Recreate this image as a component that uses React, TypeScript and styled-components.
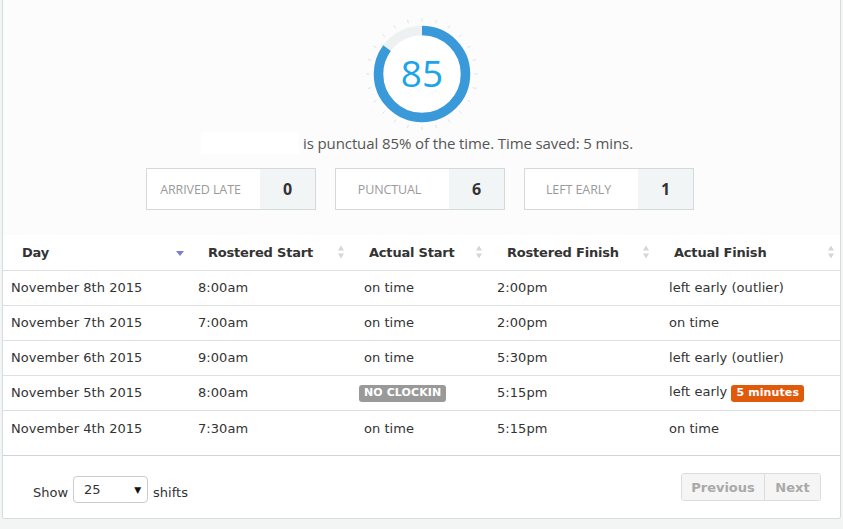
import React from "react";
import styled, { createGlobalStyle } from "styled-components";

const Global = createGlobalStyle`
  html, body { margin: 0; padding: 0; background: #f3f4f4; }
  body { font-family: "Open Sans", "Liberation Sans", sans-serif; }
  * { box-sizing: border-box; }
`;

const Page = styled.div`
  padding: 0 2px 0 2px;
  width: 843px;
`;

const Card = styled.div`
  width: 839px;
  height: 519px;
  background: #fcfcfc;
  border: 1px solid #d6dde1;
  border-top: none;
  border-radius: 0 0 3px 3px;
  display: flex;
  flex-direction: column;
  overflow: hidden;
`;

const Summary = styled.section`
  display: flex;
  flex-direction: column;
  align-items: center;
  padding-top: 16px;
  height: 235px;
`;

const GaugeWrap = styled.div`
  width: 116px;
  height: 116px;
  margin-left: 1px;
`;

const SentenceRow = styled.div`
  display: flex;
  align-items: center;
  height: 22px;
  margin-left: -9px;
`;

const Redacted = styled.span`
  display: inline-block;
  width: 98px;
  height: 22px;
  background: #ffffff;
  margin-right: 4px;
`;

const Sentence = styled.span`
  font-size: 15px;
  color: #555;
  font-family: "Open Sans", sans-serif;
  letter-spacing: -0.1px;
`;

const StatRow = styled.div`
  display: flex;
  gap: 19px;
  margin-top: 14px;
  margin-left: -3px;
`;

const Stat = styled.div`
  width: 170px;
  height: 42px;
  border: 1px solid #d3d9dc;
  display: flex;
  background: #fff;
`;

const StatLabel = styled.div`
  flex: 1;
  display: flex;
  align-items: center;
  justify-content: center;
  padding-right: 6px;
  font-size: 12.5px;
  color: #9a9a9a;
  text-transform: uppercase;
  letter-spacing: -0.1px;
  font-family: "Open Sans", sans-serif;
`;

const StatValue = styled.div`
  width: 55px;
  background: #f2f5f6;
  display: flex;
  align-items: center;
  justify-content: center;
  font-size: 16px;
  font-weight: 700;
  color: #333;
`;

const TableWrap = styled.div`
  background: #fff;
  padding-bottom: 9px;
  border-bottom: 1px solid #cfd4d6;
`;

const Table = styled.table`
  width: 100%;
  border-collapse: collapse;
  table-layout: fixed;
  font-family: "DejaVu Sans", Verdana, sans-serif;
  font-size: 13px;
  color: #333;
`;

const Th = styled.th`
  height: 35px;
  text-align: left;
  font-weight: 700;
  font-size: 13px;
  padding: 0 0 0 19px;
  border-bottom: 1px solid #dde1e3;
  position: relative;
  letter-spacing: -0.2px;
`;

const SortIcon = styled.span`
  position: absolute;
  right: 4px;
  top: 50%;
  transform: translateY(-50%);
  display: flex;
`;

const Td = styled.td<{ $pl: number }>`
  padding: 0 0 0 ${(p) => p.$pl}px;
  white-space: nowrap;
  letter-spacing: 0.05px;
`;

const Row = styled.tr<{ $last?: boolean }>`
  & > td {
    border-bottom: ${(p) => (p.$last ? "none" : "1px solid #dde1e3")};
    height: ${(p) => (p.$last ? "36px" : "35px")};
  }
`;

const Badge = styled.span<{ $tone: "grey" | "orange"; $pull?: boolean }>`
  display: inline-block;
  background: ${(p) => (p.$tone === "grey" ? "#999999" : "#e05a0c")};
  color: #fff;
  font-weight: 700;
  font-size: 11px;
  padding: 1px 5px 2px;
  border-radius: 3px;
  line-height: 14px;
  letter-spacing: 0.1px;
  margin-left: ${(p) => (p.$pull ? "-5px" : "0")};
`;

const Footer = styled.div`
  flex: 1;
  background: #fff;
  display: flex;
  justify-content: space-between;
  align-items: flex-start;
  padding: 17px 19px 0 30px;
`;

const ShowGroup = styled.div`
  display: flex;
  align-items: flex-end;
  gap: 5px;
  margin-top: 3px;
  font-family: "DejaVu Sans", Verdana, sans-serif;
  font-size: 13px;
  color: #333;
`;

const ShowText = styled.span`
  line-height: 16px;
  padding-bottom: 2px;
`;

const FakeSelect = styled.div`
  width: 75px;
  height: 27px;
  border: 1px solid #ccc;
  border-radius: 4px;
  background: #fff;
  display: flex;
  align-items: flex-start;
  justify-content: space-between;
  padding: 5px 6px 0 10px;
  font-size: 13px;
  color: #333;
`;

const Caret = styled.span`
  font-size: 9px;
  margin-top: 3px;
  color: #111;
`;

const Pager = styled.div`
  display: flex;
  border: 1px solid #dcdcdc;
  border-radius: 3px;
  overflow: hidden;
  background: #f5f5f5;
`;

const PageBtn = styled.button<{ $w: number }>`
  width: ${(p) => p.$w}px;
  height: 26px;
  border: none;
  background: #f5f5f5;
  color: #a9a9a9;
  font-family: "DejaVu Sans", Verdana, sans-serif;
  font-weight: 700;
  font-size: 13px;
  padding: 0;
  & + & { border-left: 1px solid #dcdcdc; }
`;

const Gauge: React.FC<{ value: number }> = ({ value }) => {
  const cx = 58;
  const cy = 58;
  const r = 43.5;
  const circ = 2 * Math.PI * r;
  const ticks = Array.from({ length: 24 }, (_, i) => i * 15);
  return (
    <svg width="116" height="116" viewBox="0 0 116 116">
      {ticks.map((a) => {
        const rad = (a * Math.PI) / 180;
        const r1 = 52.5;
        const r2 = 56;
        return (
          <line
            key={a}
            x1={cx + r1 * Math.sin(rad)}
            y1={cy - r1 * Math.cos(rad)}
            x2={cx + r2 * Math.sin(rad)}
            y2={cy - r2 * Math.cos(rad)}
            stroke="#dfe2e3"
            strokeWidth="1"
          />
        );
      })}
      <circle cx={cx} cy={cy} r={r} fill="#fff" stroke="#eef1f2" strokeWidth="9.5" />
      <circle
        cx={cx}
        cy={cy}
        r={r}
        fill="none"
        stroke="#3a9ad9"
        strokeWidth="9.5"
        strokeDasharray={`${(circ * value) / 100} ${circ}`}
        transform={`rotate(-90 ${cx} ${cy})`}
      />
      <text
        x={cx}
        y={cy + 13}
        textAnchor="middle"
        fontFamily="'Open Sans', sans-serif"
        fontSize="37"
        fill="#19a5ea"
      >
        {value}
      </text>
    </svg>
  );
};

const Sort: React.FC<{ active?: boolean }> = ({ active }) =>
  active ? (
    <svg width="10" height="14" viewBox="0 0 10 14">
      <path d="M1 6 L9 6 L5 11 Z" fill="#7a7fcf" />
    </svg>
  ) : (
    <svg width="10" height="16" viewBox="0 0 10 16">
      <path d="M2 6.5 L8 6.5 L5 1.5 Z" fill="#d6d6d6" />
      <path d="M2 9.5 L8 9.5 L5 14.5 Z" fill="#d6d6d6" />
    </svg>
  );

type Cell = React.ReactNode;
const rows: Cell[][] = [
  ["November 8th 2015", "8:00am", "on time", "2:00pm", "left early (outlier)"],
  ["November 7th 2015", "7:00am", "on time", "2:00pm", "on time"],
  ["November 6th 2015", "9:00am", "on time", "5:30pm", "left early (outlier)"],
  [
    "November 5th 2015",
    "8:00am",
    <Badge $tone="grey" $pull>
      NO CLOCKIN
    </Badge>,
    "5:15pm",
    <>
      left early <Badge $tone="orange">5 minutes</Badge>
    </>,
  ],
  ["November 4th 2015", "7:30am", "on time", "5:15pm", "on time"],
];

const columns = [
  { label: "Day", width: 186, cpl: 8, active: true },
  { label: "Rostered Start", width: 161, cpl: 9 },
  { label: "Actual Start", width: 138, cpl: 14 },
  { label: "Rostered Finish", width: 167, cpl: 9 },
  { label: "Actual Finish", width: 185, cpl: 14 },
];

const stats = [
  { label: "Arrived late", value: 0 },
  { label: "Punctual", value: 6 },
  { label: "Left early", value: 1 },
];

export default function App() {
  return (
    <>
      <Global />
      <Page>
        <Card>
          <Summary>
            <GaugeWrap>
              <Gauge value={85} />
            </GaugeWrap>
            <SentenceRow>
              <Redacted />
              <Sentence>is punctual 85% of the time. Time saved: 5 mins.</Sentence>
            </SentenceRow>
            <StatRow>
              {stats.map((s) => (
                <Stat key={s.label}>
                  <StatLabel>{s.label}</StatLabel>
                  <StatValue>{s.value}</StatValue>
                </Stat>
              ))}
            </StatRow>
          </Summary>
          <TableWrap>
            <Table>
              <colgroup>
                {columns.map((c) => (
                  <col key={c.label} style={{ width: c.width }} />
                ))}
              </colgroup>
              <thead>
                <tr>
                  {columns.map((c) => (
                    <Th key={c.label}>
                      {c.label}
                      <SortIcon>
                        <Sort active={c.active} />
                      </SortIcon>
                    </Th>
                  ))}
                </tr>
              </thead>
              <tbody>
                {rows.map((r, i) => (
                  <Row key={i} $last={i === rows.length - 1}>
                    {r.map((cell, j) => (
                      <Td key={j} $pl={columns[j].cpl}>
                        {cell}
                      </Td>
                    ))}
                  </Row>
                ))}
              </tbody>
            </Table>
          </TableWrap>
          <Footer>
            <ShowGroup>
              <ShowText>Show</ShowText>
              <FakeSelect>
                25<Caret>▼</Caret>
              </FakeSelect>
              <ShowText>shifts</ShowText>
            </ShowGroup>
            <Pager>
              <PageBtn $w={82}>Previous</PageBtn>
              <PageBtn $w={56}>Next</PageBtn>
            </Pager>
          </Footer>
        </Card>
      </Page>
    </>
  );
}
